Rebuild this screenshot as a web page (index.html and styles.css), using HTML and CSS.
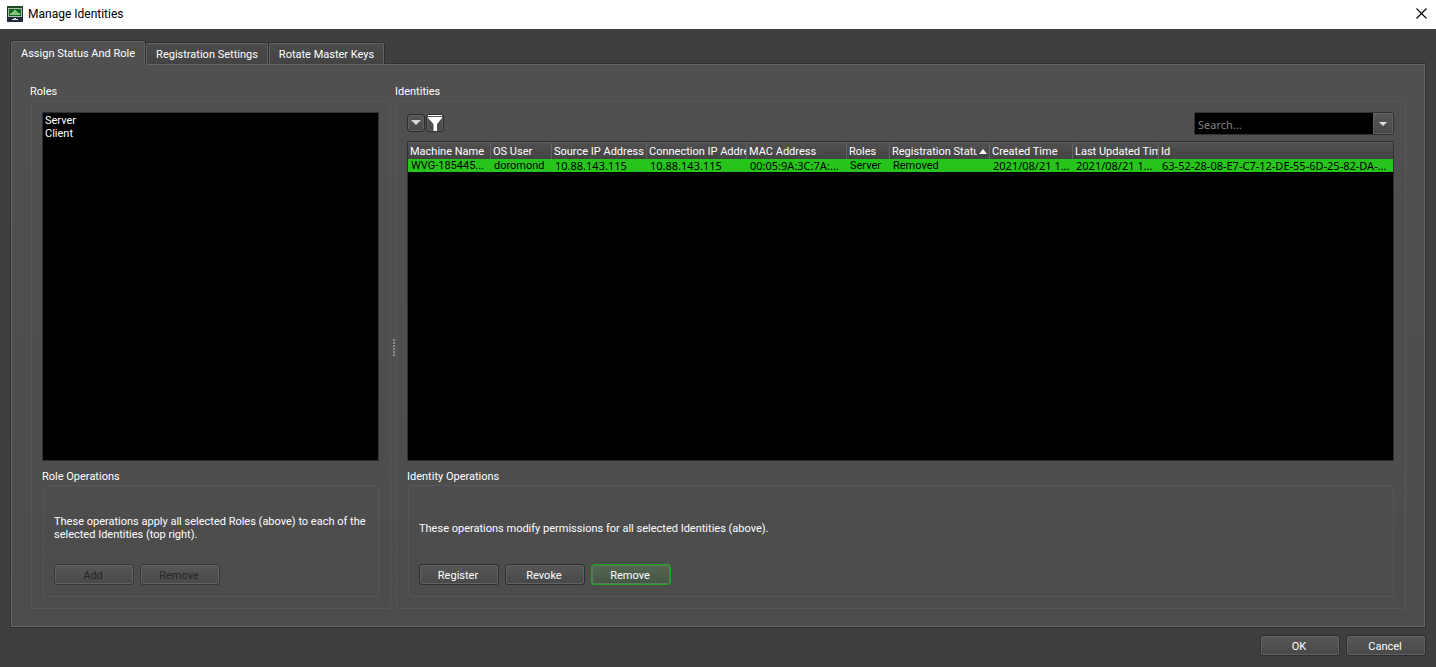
FILE: index.html
```html
<!DOCTYPE html>
<html lang="en">
<head>
<meta charset="utf-8">
<title>Manage Identities</title>
<link rel="stylesheet" href="styles.css">
</head>
<body>
<header class="titlebar">
  <svg class="app-icon" width="16" height="16" viewBox="0 0 16 16" aria-hidden="true">
    <rect width="16" height="16" fill="#1f2b3a"/>
    <rect width="16" height="2" fill="#1d4a22"/>
    <rect x="1" y="2" width="14" height="9" fill="#a9bcae"/>
    <rect x="2" y="3" width="12" height="7" fill="#12681a"/>
    <path d="M3 9V7h2V6h1V5h1V4h2v1h1v1h1v1h2v2z" fill="#7fc483"/>
    <path d="M7 12h2v1h2v1H5v-1h2z" fill="#dfe5e5"/>
  </svg>
  <h1 class="title">Manage Identities</h1>
  <button class="close" type="button" aria-label="Close">
    <svg width="11" height="11" viewBox="0 0 11 11" aria-hidden="true"><path d="M.5.5l10 10M10.500.5l-10 10" stroke="#000" stroke-width="1.1" fill="none"/></svg>
  </button>
</header>
<main class="dialog">
  <div class="tabs" role="tablist">
    <button class="tab tab-active" type="button" role="tab" aria-selected="true">Assign Status And Role</button>
    <button class="tab" type="button" role="tab" aria-selected="false">Registration Settings</button>
    <button class="tab" type="button" role="tab" aria-selected="false">Rotate Master Keys</button>
  </div>
  <div class="panel">
    <section class="group roles">
      <h2 class="group-title">Roles</h2>
      <div class="group-box">
        <ul class="role-list">
          <li>Server</li>
          <li>Client</li>
        </ul>
        <h3 class="ops-title">Role Operations</h3>
        <div class="ops-box">
          <p class="ops-text">These operations apply all selected Roles (above) to each of the selected Identities (top right).</p>
          <div class="ops-buttons">
            <button class="btn" type="button" disabled>Add</button>
            <button class="btn" type="button" disabled>Remove</button>
          </div>
        </div>
      </div>
    </section>
    <div class="splitter"><i></i><i></i><i></i><i></i><i></i><i></i></div>
    <section class="group identities">
      <h2 class="group-title">Identities</h2>
      <div class="group-box">
        <div class="toolbar">
          <button class="tool" type="button" aria-label="Options">
            <svg width="16" height="16" viewBox="0 0 16 16" aria-hidden="true"><path d="M3 5h10L8 10z" fill="#d2d2d2"/></svg>
          </button>
          <button class="tool" type="button" aria-label="Filter">
            <svg width="16" height="16" viewBox="0 0 16 16" aria-hidden="true"><path d="M1 0h14v1H1zM1 2h14v1L10 9v7H6.500V9L1 3z" fill="#fff"/></svg>
          </button>
          <div class="search">
            <input class="search-input" type="text" placeholder="Search..." aria-label="Search">
            <button class="search-drop" type="button" aria-label="Search options">
              <svg width="8" height="4" viewBox="0 0 8 4" aria-hidden="true"><path d="M0 0h8L4 4z" fill="#e0e0e0"/></svg>
            </button>
          </div>
        </div>
        <div class="table-view">
          <table class="grid">
            <colgroup>
              <col class="c-machine"><col class="c-user"><col class="c-source"><col class="c-wide"><col class="c-wide">
              <col class="c-roles"><col class="c-wide"><col class="c-created"><col class="c-updated"><col>
            </colgroup>
            <thead>
              <tr>
                <th>Machine Name</th><th>OS User</th><th>Source IP Address</th><th>Connection IP Addre</th><th>MAC Address</th>
                <th>Roles</th>
                <th><div class="sorted"><span>Registration Status</span><svg width="8" height="5" viewBox="0 0 8 5" aria-hidden="true"><path d="M0 5h8L4 0z" fill="#fff"/></svg></div></th>
                <th>Created Time</th><th>Last Updated Tim</th><th>Id</th>
              </tr>
            </thead>
            <tbody>
              <tr>
                <td>WVG-185445...</td><td>doromond</td><td class="num">10.88.143.115</td><td class="num">10.88.143.115</td><td class="num">00:05:9A:3C:7A:...</td>
                <td>Server</td><td>Removed</td><td class="num">2021/08/21 1...</td><td class="num">2021/08/21 1...</td><td class="num">63-52-28-08-E7-C7-12-DE-55-6D-25-82-DA-...</td>
              </tr>
            </tbody>
          </table>
        </div>
        <h3 class="ops-title">Identity Operations</h3>
        <div class="ops-box">
          <p class="ops-text">These operations modify permissions for all selected Identities (above).</p>
          <div class="ops-buttons">
            <button class="btn" type="button">Register</button>
            <button class="btn" type="button">Revoke</button>
            <button class="btn btn-focus" type="button">Remove</button>
          </div>
        </div>
      </div>
    </section>
  </div>
  <footer class="actions">
    <button class="btn" type="button">OK</button>
    <button class="btn" type="button">Cancel</button>
  </footer>
</main>
</body>
</html>
```
FILE: styles.css
```css
* { box-sizing: border-box; }

body {
  margin: 0;
  min-height: 100vh;
  display: flex;
  flex-direction: column;
  background: #3f3f3f;
  color: #fff;
  font: 11px/13px Roboto, sans-serif;
}

h1, h2, h3, p, ul { margin: 0; padding: 0; font-size: inherit; font-weight: normal; }
button, input { font: inherit; color: inherit; }
svg { display: block; }

.titlebar {
  height: 29px;
  flex: none;
  display: flex;
  align-items: center;
  padding: 0 9px 2px 7px;
  background: #fff;
  color: #000;
}
.title { margin-left: 5px; font: 12px/16px Roboto, sans-serif; }
.close { margin-left: auto; padding: 0; border: 0; background: none; }

.dialog { flex: 1; display: flex; flex-direction: column; padding: 12px 10px 11px; }

.tabs { display: flex; align-items: flex-end; gap: 1px; padding: 0 1px; }
.tab {
  height: 21px;
  padding: 0 9px;
  border: 1px solid #626262;
  border-bottom: 0;
  border-radius: 2px 2px 0 0;
  box-shadow: 0 0 0 1px #2f2f2f;
  clip-path: inset(-1px -1px 0 -1px);
  background: linear-gradient(#4b4b4b, #434343);
}
.tab-active {
  height: 24px;
  margin-bottom: -1px;
  padding-bottom: 1px;
  background: #505050;
  position: relative;
  z-index: 1;
}

.panel {
  flex: 1;
  display: flex;
  margin: 0 1px;
  padding: 20px 18px 17px;
  border: 1px solid #666;
  outline: 1px solid #2f2f2f;
  background: linear-gradient(#505050, #4c4c4c);
}

.group { display: flex; flex-direction: column; }
.roles { width: 361px; flex: none; }
.identities { flex: 1; min-width: 0; }
.group-box {
  flex: 1;
  display: flex;
  flex-direction: column;
  margin: 3px 0 0 1px;
  padding: 10px 11px 11px 10px;
  border: 1px solid #575757;
  border-radius: 3px;
}

.role-list {
  flex: 1;
  padding: 1px 2px;
  border: 1px solid #303030;
  background: #000;
  list-style: none;
}
.ops-title { margin-top: 9px; }
.ops-box {
  height: 112px;
  display: flex;
  flex-direction: column;
  margin: 2px 0 0 1px;
  padding: 6px 10px 11px;
  border: 1px solid #575757;
  border-radius: 3px;
}
.ops-text { flex: 1; display: flex; align-items: center; }
.ops-buttons { display: flex; gap: 6px; }

.btn {
  width: 80px;
  height: 21px;
  padding: 1px 2px 0 0;
  border: 1px solid #2e2e2e;
  border-radius: 3px;
  box-shadow: inset 0 0 0 1px #626262;
  background: linear-gradient(#575757, #484848);
}
.btn:disabled { color: #262626; border-color: #373737; }
.btn-focus {
  border-color: #1fa51a;
  box-shadow: inset 0 0 0 1px #5a7a57;
  background: linear-gradient(#536653, #455545);
}

.splitter {
  width: 4px;
  display: flex;
  flex-direction: column;
  align-items: flex-end;
  justify-content: center;
  gap: 1px;
}
.splitter i { width: 2px; height: 2px; background: #8e8e8e; }

.toolbar { display: flex; align-items: center; gap: 1px; height: 23px; }
.tool {
  width: 18px;
  height: 18px;
  margin-bottom: 1px;
  padding: 0;
  border: 1px solid #2c2c2c;
  border-radius: 3px;
  box-shadow: inset 0 0 0 1px #606060;
  background: linear-gradient(#565656, #484848);
}
.search {
  display: flex;
  width: 200px;
  height: 23px;
  margin-left: auto;
  border: 1px solid #303030;
  border-radius: 2px;
  background: #000;
}
.search-input { flex: 1; min-width: 0; padding: 1px 3px 0; border: 0; outline: 0; background: #000; font-family: "Noto Sans", sans-serif; }
.search-input::placeholder { color: #808080; opacity: 1; }
.search-drop {
  width: 20px;
  display: grid;
  place-items: center;
  padding: 0;
  border: 1px solid #626262;
  background: linear-gradient(#575757, #484848);
}

.table-view { flex: 1; margin-top: 6px; border: 1px solid #303030; background: #000; }
.grid { width: 100%; table-layout: fixed; border-collapse: separate; border-spacing: 0; }
.grid th, .grid td { padding: 0; overflow: hidden; white-space: nowrap; text-align: left; font-weight: normal; }
.grid th {
  height: 17px;
  padding-left: 2px;
  border-right: 1px solid #636363;
  border-top: 1px solid #5e5e5e;
  background: linear-gradient(#505050, #444);
}
.grid th:last-child { border-right: 0; }
.grid td { height: 13px; padding-left: 3px; background: #27c51b; color: #000; }
.grid .num { font-family: "Noto Sans", sans-serif; }
.c-machine, .c-created { width: 83px; }
.c-user { width: 61px; }
.c-source { width: 95px; }
.c-wide { width: 100px; }
.c-roles { width: 43px; }
.c-updated { width: 86px; }
.sorted { display: flex; align-items: center; gap: 2px; padding-right: 2px; }
.sorted span { flex: 1; overflow: hidden; }
.sorted svg { flex: none; }

.actions { display: flex; justify-content: flex-end; gap: 6px; padding-top: 8px; }
```
